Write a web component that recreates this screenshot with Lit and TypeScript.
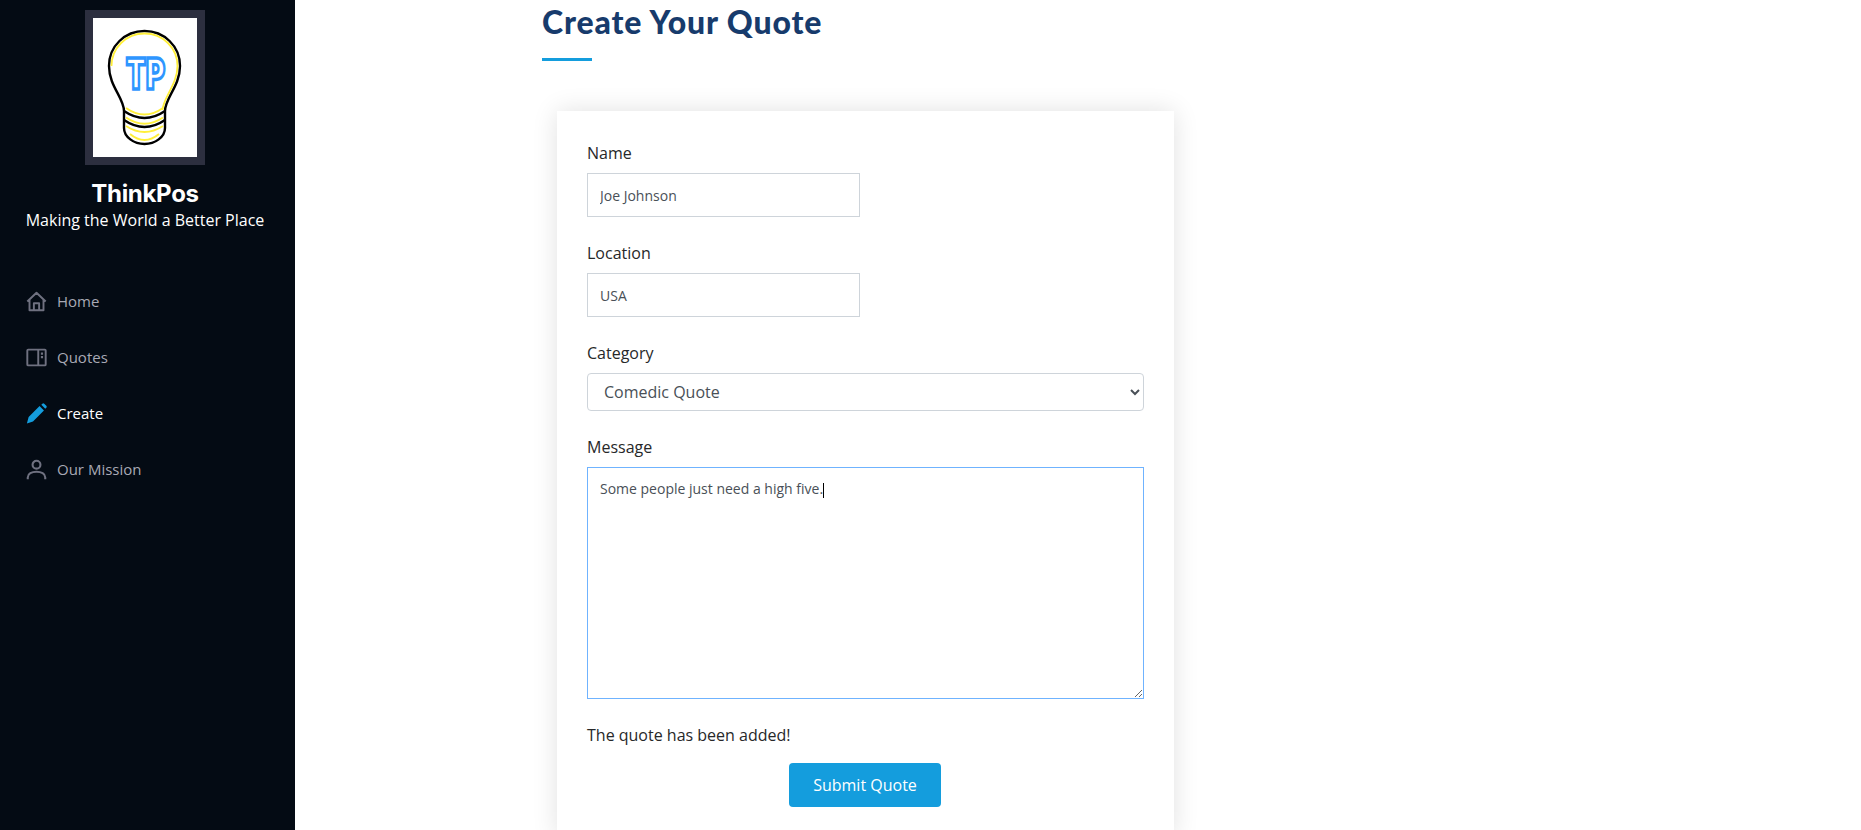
import { LitElement, html, css } from "lit";
import { customElement } from "lit/decorators.js";

@customElement("app-root")
export class AppRoot extends LitElement {
  static styles = css`
    :host { display: flex; width: 1861px; height: 830px; overflow: hidden; background: #fff; font-family: "Open Sans", sans-serif; color: #272829; }
    * { box-sizing: border-box; }
    .side { width: 295px; flex: none; height: 830px; background: #040b14; padding: 10px 5px 0 0; display: flex; flex-direction: column; align-items: center; }
    .logo { width: 120px; height: 155px; border: 8px solid #2c2f3f; background: #fff; display: block; flex: none; }
    .brand { margin: 14px 0 0; font: 700 24px/29px Inter, sans-serif; color: #fff; letter-spacing: -0.3px; }
    .tag { margin: 0; font-size: 16px; line-height: 24px; color: #fff; }
    nav { align-self: stretch; margin-top: 41px; display: flex; flex-direction: column; }
    a { height: 56px; display: flex; align-items: center; padding-left: 26px; gap: 10px; color: #a8a9b4; font-size: 15px; }
    a svg { width: 21px; height: 21px; color: #6f7180; flex: none; }
    a.on { color: #fff; }
    a.on svg { color: #149ddd; }
    main { flex: 1; padding-left: 247px; }
    h2 { margin: 3px 0 0; font: 900 32px/38px Lato, sans-serif; color: #173b6c; letter-spacing: 0.87px; }
    .bar { width: 50px; height: 3px; background: #149ddd; margin-top: 17px; }
    .card { margin: 50px 0 0 15px; width: 617px; padding: 30px; background: #fff; box-shadow: 0 0 24px rgba(0,0,0,.12); }
    .group { margin-bottom: 24px; }
    label { display: block; font-size: 16px; line-height: 24px; margin-bottom: 8px; color: #272829; }
    input, textarea, select { font-family: "Open Sans", sans-serif; color: #495057; display: block; background: #fff; outline: none; }
    input { width: 273px; height: 44px; border: 1px solid #ced4da; border-radius: 0; padding: 0 12px; font-size: 14px; }
    select { width: 100%; height: 38px; border: 1px solid #ced4da; border-radius: 4px; padding: 0 12px; font-size: 16px; }
    .ta { position: relative; height: 232px; }
    textarea { width: 100%; height: 232px; border: 1px solid #6fb3ff; border-radius: 0; padding: 10px 12px; font-size: 14px; line-height: 21px; resize: vertical; }
    .caret { position: absolute; left: 236px; top: 16px; width: 1px; height: 15px; background: #000; }
    .msg { margin: 0 0 16px; font-size: 16px; line-height: 24px; color: #272829; }
    .actions { display: flex; justify-content: center; padding-right: 1px; }
    button { width: 152px; height: 44px; border: 0; border-radius: 4px; background: #149ddd; color: #fff; font: 400 16px "Open Sans", sans-serif; }
  `;

  render() {
    return html`
      <aside class="side">
        <svg class="logo" viewBox="0 0 104 139" aria-label="ThinkPos logo">
          <path d="M31 93C31 80 16 68 16 48C16 28 32 13 51.5 13C71 13 87 28 87 48C87 68 72 80 72 93V110C72 119 62 126 51.5 126C41 126 31 119 31 110Z" fill="#fff" stroke="#000" stroke-width="2.4"/>
          <path d="M18.500 48C18.500 30 33 15.500 51.500 15.500C70 15.500 84.500 30 84.500 48C84.500 66 70 80 69.500 92" fill="none" stroke="#ffef3a" stroke-width="1.800"/>
          <path d="M33 90Q51.500 103 70 90M33 99.500Q51.500 112 70 99.500M33 108Q51.500 120 70 108M37 116Q51.500 128 66 116" fill="none" stroke="#ffef3a" stroke-width="2"/>
          <path d="M31 93Q51.500 107 72 93M31 102Q51.500 116 72 102" fill="none" stroke="#000" stroke-width="2.400"/>
          <text x="52.500" y="71" text-anchor="middle" font-family="Inter, sans-serif" font-weight="900" font-size="42" fill="#fff" stroke="#2e96ff" stroke-width="3.400" textLength="39" lengthAdjust="spacingAndGlyphs">TP</text>
        </svg>
        <h1 class="brand">ThinkPos</h1>
        <p class="tag">Making the World a Better Place</p>
        <nav>
          <a>
            <svg viewBox="0 0 24 24" fill="none" stroke="currentColor" stroke-width="2.200" stroke-linejoin="round"><path d="M1.500 12 12 2l10.500 10M4 10v12h16V10M9 22v-8h6v8"/></svg>
            Home
          </a>
          <a>
            <svg viewBox="0 0 24 24" fill="none" stroke="currentColor" stroke-width="2.200"><rect x="1.500" y="3" width="21" height="18" rx="1"/><path d="M14 3v18"/><path d="M17 7.500h2.500M17 11.500h2.500" stroke-width="2.500"/></svg>
            Quotes
          </a>
          <a class="on">
            <svg viewBox="0 0 24 24" fill="currentColor"><path d="M1 23.500 3 16 15.500 3.500l5 5L8 21ZM17.500 2l1.200-1.200a1.500 1.500 0 0 1 2.100 0l2.400 2.400a1.500 1.500 0 0 1 0 2.100L22 6.500Z"/></svg>
            Create
          </a>
          <a>
            <svg viewBox="0 0 24 24" fill="none" stroke="currentColor" stroke-width="2.400"><circle cx="12" cy="6.500" r="4.500"/><path d="M2 23v-2c0-4 4.500-6.500 10-6.500s10 2.500 10 6.500v2"/></svg>
            Our Mission
          </a>
        </nav>
      </aside>
      <main>
        <h2>Create Your Quote</h2>
        <div class="bar"></div>
        <form class="card">
          <div class="group"><label>Name</label><input value="Joe Johnson" /></div>
          <div class="group"><label>Location</label><input value="USA" /></div>
          <div class="group"><label>Category</label><select><option>Comedic Quote</option></select></div>
          <div class="group"><label>Message</label>
            <div class="ta"><textarea .value=${"Some people just need a high five."}></textarea><span class="caret"></span></div>
          </div>
          <p class="msg">The quote has been added!</p>
          <div class="actions"><button type="button">Submit Quote</button></div>
        </form>
      </main>
    `;
  }
}
